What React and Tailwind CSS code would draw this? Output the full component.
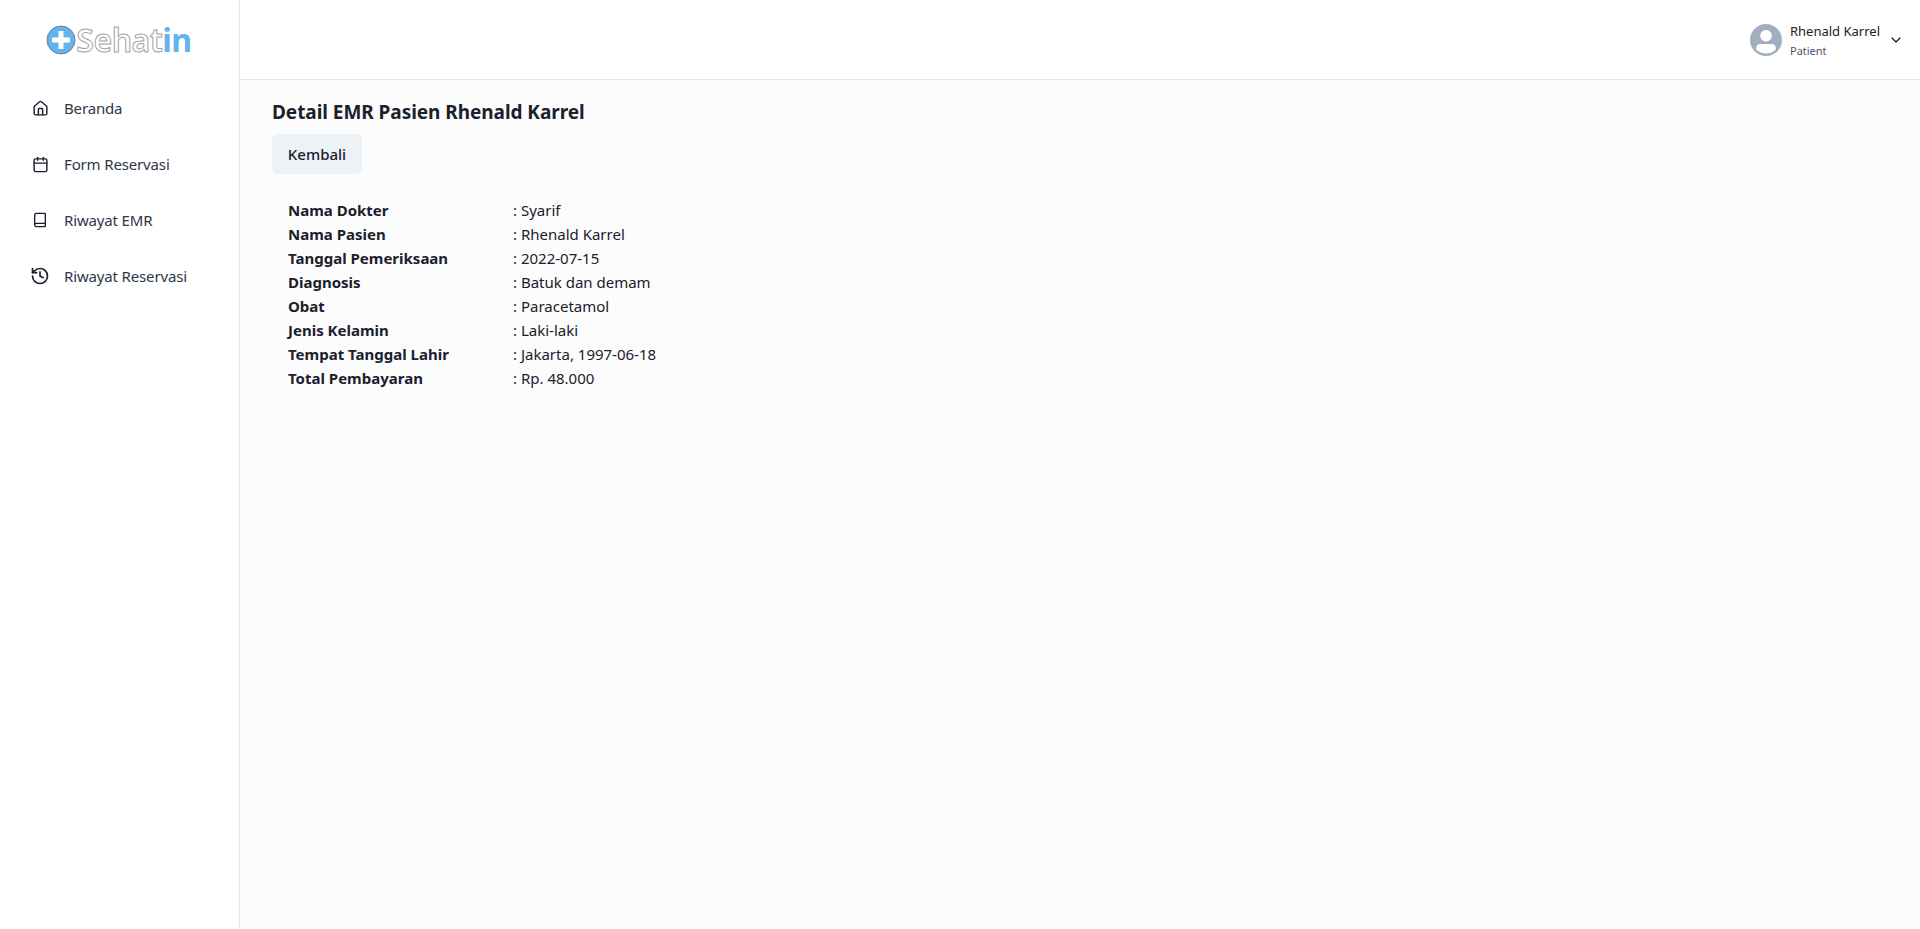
import { Book, Calendar, ChevronDown, History, House } from 'lucide-react'

const navItems = [
  { label: 'Beranda', icon: House, size: 17 },
  { label: 'Form Reservasi', icon: Calendar, size: 17 },
  { label: 'Riwayat EMR', icon: Book, size: 16 },
  { label: 'Riwayat Reservasi', icon: History, size: 20 },
]

const details = [
  ['Nama Dokter', 'Syarif'],
  ['Nama Pasien', 'Rhenald Karrel'],
  ['Tanggal Pemeriksaan', '2022-07-15'],
  ['Diagnosis', 'Batuk dan demam'],
  ['Obat', 'Paracetamol'],
  ['Jenis Kelamin', 'Laki-laki'],
  ['Tempat Tanggal Lahir', 'Jakarta, 1997-06-18'],
  ['Total Pembayaran', 'Rp. 48.000'],
]

function Logo() {
  return (
    <div className="flex items-center h-20 justify-center pr-[1px]">
      <svg width="30" height="30" viewBox="0 0 30 30" className="shrink-0">
        <circle cx="15" cy="15" r="14" fill="#63b3ed" stroke="#718096" strokeWidth="1" />
        <path d="M12.5 6h5v6.5H24v5h-6.5V24h-5v-6.5H6v-5h6.5z" fill="#fff" />
      </svg>
      <span className="text-[32px] leading-none font-semibold tracking-[-0.5px]">
        <span className="text-white [-webkit-text-stroke:1px_#a3a3a3]">Sehat</span>
        <span className="text-[#63b3ed] font-bold">in</span>
      </span>
    </div>
  )
}

function Sidebar() {
  return (
    <aside className="w-60 shrink-0 bg-white border-r border-[#e2e8f0]">
      <Logo />
      <nav className="flex flex-col">
        {navItems.map(({ label, icon: Icon, size }) => (
          <div key={label} className="flex items-center h-14 pl-8 gap-[16px] text-[15px] tracking-[-0.15px] text-[#2d3748]">
            <div className="w-4 flex justify-center">
              <Icon size={size} strokeWidth={2} className="shrink-0 text-[#1a202c]" />
            </div>
            <span>{label}</span>
          </div>
        ))}
      </nav>
    </aside>
  )
}

function Header() {
  return (
    <header className="h-20 bg-white border-b border-[#e2e8f0] flex items-center justify-end pr-[16px]">
      <div className="w-8 h-8 rounded-full bg-[#a0aec0] overflow-hidden">
        <svg viewBox="0 0 128 128" className="w-full h-full" fill="#fff">
          <path d="M103,102.1388 C93.094,111.92 79.3504,118 64.1638,118 C48.8056,118 34.9294,111.768 25,101.7892 L25,95.2 C25,86.8096 31.981,80 40.6,80 L87.4,80 C96.019,80 103,86.8096 103,95.2 L103,102.1388 Z" />
          <path d="M63.9961647,24 C51.2938136,24 41,34.2938136 41,46.9961647 C41,59.7061864 51.2938136,70 63.9961647,70 C76.6985159,70 87,59.7061864 87,46.9961647 C87,34.2938136 76.6985159,24 63.9961647,24" />
        </svg>
      </div>
      <div className="ml-2 flex flex-col gap-[2px]">
        <span className="text-[13px] leading-5 text-[#1a202c]">Rhenald Karrel</span>
        <span className="text-[11px] leading-4 text-[#4a5568]">Patient</span>
      </div>
      <ChevronDown size={16} className="ml-[8px] text-[#1a202c]" />
    </header>
  )
}

export default function App() {
  return (
    <div className="flex h-[929px] overflow-hidden font-['Noto_Sans',sans-serif] text-[#1a202c] bg-[#fcfcfc]">
      <Sidebar />
      <div className="flex-1 flex flex-col">
        <Header />
        <main className="pl-8 pt-[18px]">
          <h1 className="text-[19px] leading-7 font-bold tracking-[-0.05px]">Detail EMR Pasien Rhenald Karrel</h1>
          <button className="mt-[8px] h-10 w-[90px] rounded-md bg-[#edf2f7] text-[15px] font-medium">Kembali</button>
          <div className="mt-6 pl-4 text-[15px]">
            {details.map(([label, value]) => (
              <div key={label} className="flex leading-6">
                <span className="w-[225px] font-bold">{label}</span>
                <span>: {value}</span>
              </div>
            ))}
          </div>
        </main>
      </div>
    </div>
  )
}
